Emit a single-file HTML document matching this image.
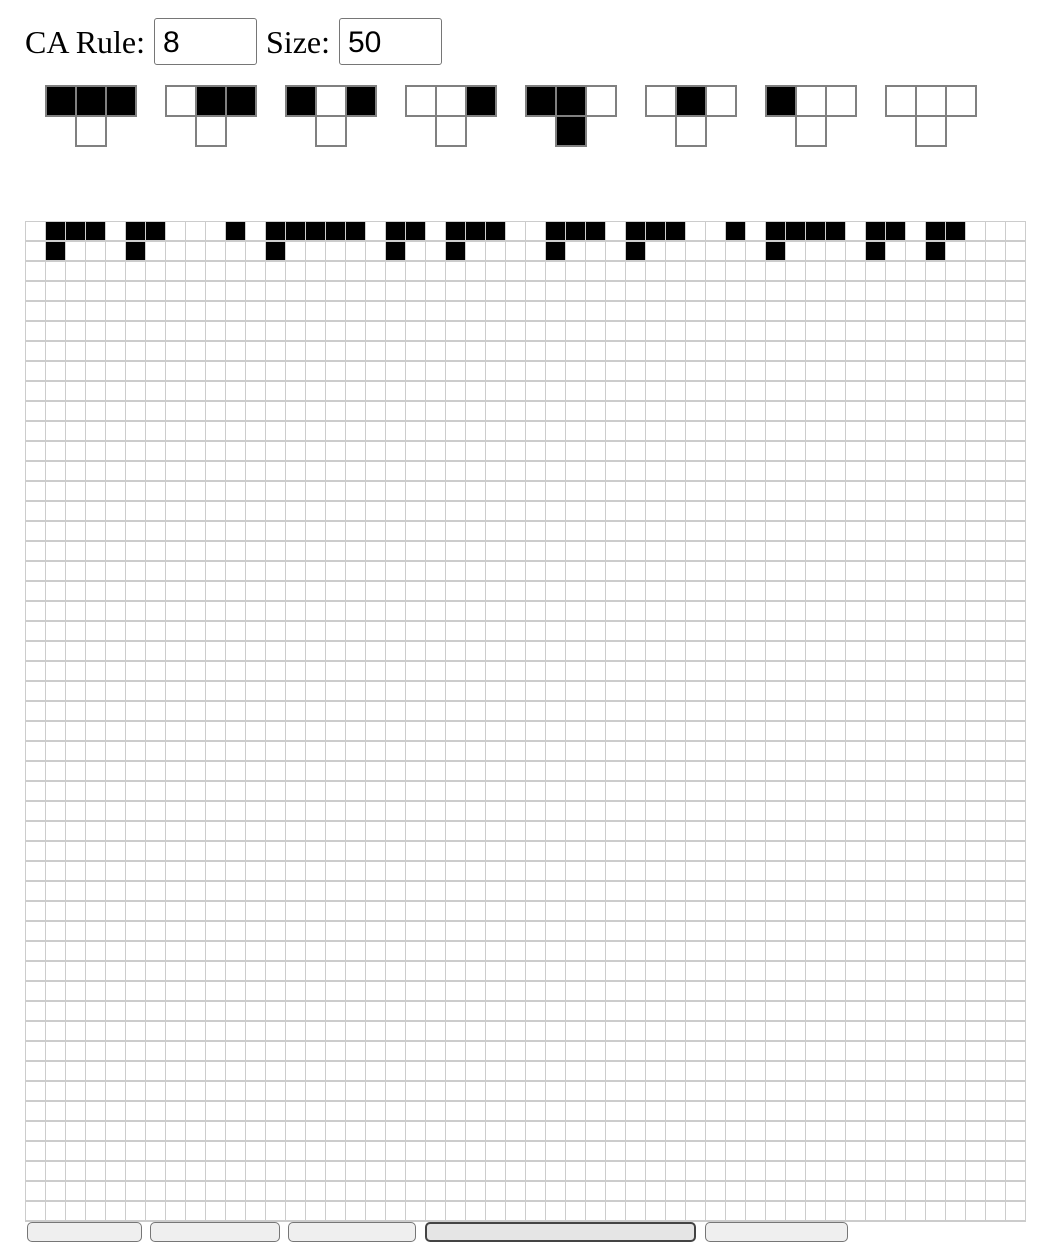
<!DOCTYPE html>
<html><head><meta charset="utf-8"><style>
body{margin:0;width:1038px;height:1230px;overflow:hidden;background:#fff;position:relative;font-family:"Liberation Serif",serif;}
.lbl{position:absolute;font-size:32px;top:23px;line-height:38px;}
.inp{position:absolute;top:18px;border:1px solid #767676;border-radius:3px;font-family:"Liberation Sans",sans-serif;font-size:30px;line-height:47px;padding-left:8px;box-sizing:border-box;width:103px;height:47px;}
.rc{position:absolute;width:28px;height:28px;border:2px solid #808080;box-sizing:content-box;background:#fff;}
.b{background:#000;}
#grid{position:absolute;left:25px;top:221px;width:1001px;height:1001px;
background-image:linear-gradient(to right,#ccc 1px,transparent 1px),linear-gradient(to bottom,#ccc 1px,transparent 1px,transparent 19px,#ccc 19px);
background-size:20px 20px,20px 20px;}
.k{position:absolute;width:19px;height:18px;background:#000;}
.btn{position:absolute;top:1222px;height:20px;border:1px solid #767676;border-radius:5px;background:#efefef;box-sizing:border-box;}
</style></head><body>
<div class="lbl" style="left:25px">CA Rule:</div>
<div class="inp" style="left:154px">8</div>
<div class="lbl" style="left:266px">Size:</div>
<div class="inp" style="left:339px">50</div>

<div id="rules"></div>
<div id="grid"></div>

<div class="btn" style="left:27px;width:115px"></div>
<div class="btn" style="left:150px;width:130px"></div>
<div class="btn" style="left:288px;width:128px"></div>
<div class="btn" style="left:425px;width:271px;border:2px solid #444;background:#e5e5e5"></div>
<div class="btn" style="left:705px;width:143px"></div>

<script>
var pats=["111","011","101","001","110","010","100","000"],bot=[0,0,0,0,1,0,0,0];
var h="";
for(var g=0;g<8;g++){var x=45+120*g;
for(var i=0;i<3;i++){h+='<div class="rc'+(pats[g][i]=="1"?" b":"")+'" style="left:'+(x+30*i)+'px;top:85px"></div>';}
h+='<div class="rc'+(bot[g]?" b":"")+'" style="left:'+(x+30)+'px;top:115px"></div>';}
document.getElementById("rules").innerHTML=h;
var r0=[1,2,3,5,6,10,12,13,14,15,16,18,19,21,22,23,26,27,28,30,31,32,35,37,38,39,40,42,43,45,46];
var r1=[1,5,12,18,21,26,30,37,42,45];
var s="";
r0.forEach(function(c){s+='<div class="k" style="left:'+(20*c+1)+'px;top:1px"></div>';});
r1.forEach(function(c){s+='<div class="k" style="left:'+(20*c+1)+'px;top:21px"></div>';});
document.getElementById("grid").innerHTML=s;
</script>
</body></html>
